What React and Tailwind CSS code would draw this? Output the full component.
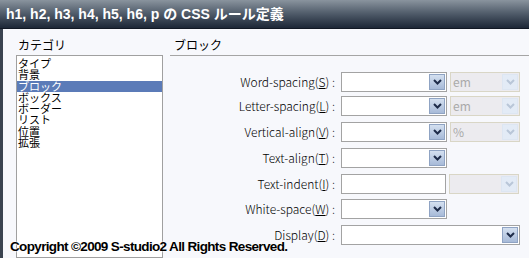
import React from "react";

const Chevron = ({ disabled }) => (
  <svg width="9" height="6" viewBox="0 0 9 6">
    <path d="M1 1 L4.5 4.5 L8 1" fill="none" stroke={disabled ? "#b9c6d8" : "#1e2c4a"} strokeWidth="2" />
  </svg>
);

const Select = ({ w, disabled, value }) => (
  <div
    className={`flex h-[20px] items-center border ${disabled ? "border-[#d9d6c6] bg-[#ecebef]" : "border-[#a3a3a3] bg-white"}`}
    style={{ width: w }}
  >
    <div className={`flex-1 pl-[2px] text-[12px] leading-none ${disabled ? "text-[#a9a9a9]" : "text-black"}`}>{value}</div>
    <div
      className={`m-[1px] flex h-[16px] w-[16px] items-center justify-center border ${disabled ? "border-[#dde6f2] bg-[#e3ebf6]" : "border-[#8fa3c3] bg-gradient-to-b from-[#d4e0f0] to-[#a7bad8]"}`}
    >
      <Chevron disabled={disabled} />
    </div>
  </div>
);

const Input = ({ w }) => <div className="h-[20px] border border-[#a3a3a3] bg-white" style={{ width: w }} />;

const Row = ({ label, u, children, mt }) => (
  <div className="flex h-[20px] items-center" style={{ marginTop: mt }}>
    <div className="w-[167px] pr-[2px] text-right text-[12px] leading-none font-light text-black">
      {label}(<span className="underline">{u}</span>) :
    </div>
    <div className="ml-[4px] flex items-center gap-[3px]">{children}</div>
  </div>
);

export default function App() {
  const items = ["タイプ", "背景", "ブロック", "ボックス", "ボーダー", "リスト", "位置", "拡張"];
  return (
    <div
      className="relative h-[258px] w-[529px] overflow-hidden bg-[#f7f8fc]"
      style={{ fontFamily: '"Noto Sans CJK JP", "Liberation Sans", sans-serif' }}
    >
      <div className="flex h-[29px] items-center border-b border-[#111824] bg-gradient-to-b from-[#8a949e] via-[#4e5a68] to-[#1d2737] pl-[6px]">
        <span
          className="text-[14px] font-bold text-white"
          style={{ fontFamily: '"Liberation Sans", "Noto Sans CJK JP", sans-serif' }}
        >
          h1, h2, h3, h4, h5, h6, p の CSS ルール定義
        </span>
      </div>
      <div className="flex h-[229px]">
        <div className="w-[3px] bg-[#3a4350]" />
        <div className="flex w-[167px] flex-col pl-[13px]">
          <div className="mt-[9px] pl-[2px] text-[12px] leading-[14px] text-black">カテゴリ</div>
          <div className="mt-[3px] h-[220px] w-[147px] border border-[#a0a0a0] bg-white pt-[2px]">
            {items.map((t, i) => (
              <div
                key={t}
                className={`h-[11.3px] pl-[1px] text-[11px] leading-[11.3px] ${i === 2 ? "bg-[#5b7bb8] text-white" : "text-black"}`}
              >
                {t}
              </div>
            ))}
          </div>
        </div>
        <div className="flex flex-1 flex-col">
          <div className="mt-[9px] pl-[4px] text-[12px] leading-[14px] text-black">ブロック</div>
          <div className="mt-[3px] h-[1px] bg-[#a5a5a5]" />
          <div className="flex flex-col pt-[16px]">
            <Row label="Word-spacing" u="S" mt={0}>
              <Select w={106} />
              <Select w={70} disabled value="em" />
            </Row>
            <Row label="Letter-spacing" u="L" mt={4}>
              <Select w={106} />
              <Select w={70} disabled value="em" />
            </Row>
            <Row label="Vertical-align" u="V" mt={6}>
              <Select w={106} />
              <Select w={70} disabled value="%" />
            </Row>
            <Row label="Text-align" u="T" mt={6}>
              <Select w={106} />
            </Row>
            <Row label="Text-indent" u="I" mt={6}>
              <Input w={105} />
              <Select w={70} disabled value="" />
            </Row>
            <Row label="White-space" u="W" mt={5}>
              <Select w={106} />
            </Row>
            <Row label="Display" u="D" mt={6}>
              <Select w={179} />
            </Row>
          </div>
        </div>
      </div>
      <div
        className="absolute left-[10px] top-[237px] text-[13.5px] font-bold tracking-[-0.65px] text-black"
        style={{ fontFamily: '"Liberation Sans", sans-serif', textShadow: "0 0 2px #fff, 0 0 2px #fff" }}
      >
        Copyright ©2009 S-studio2 All Rights Reserved.
      </div>
    </div>
  );
}
